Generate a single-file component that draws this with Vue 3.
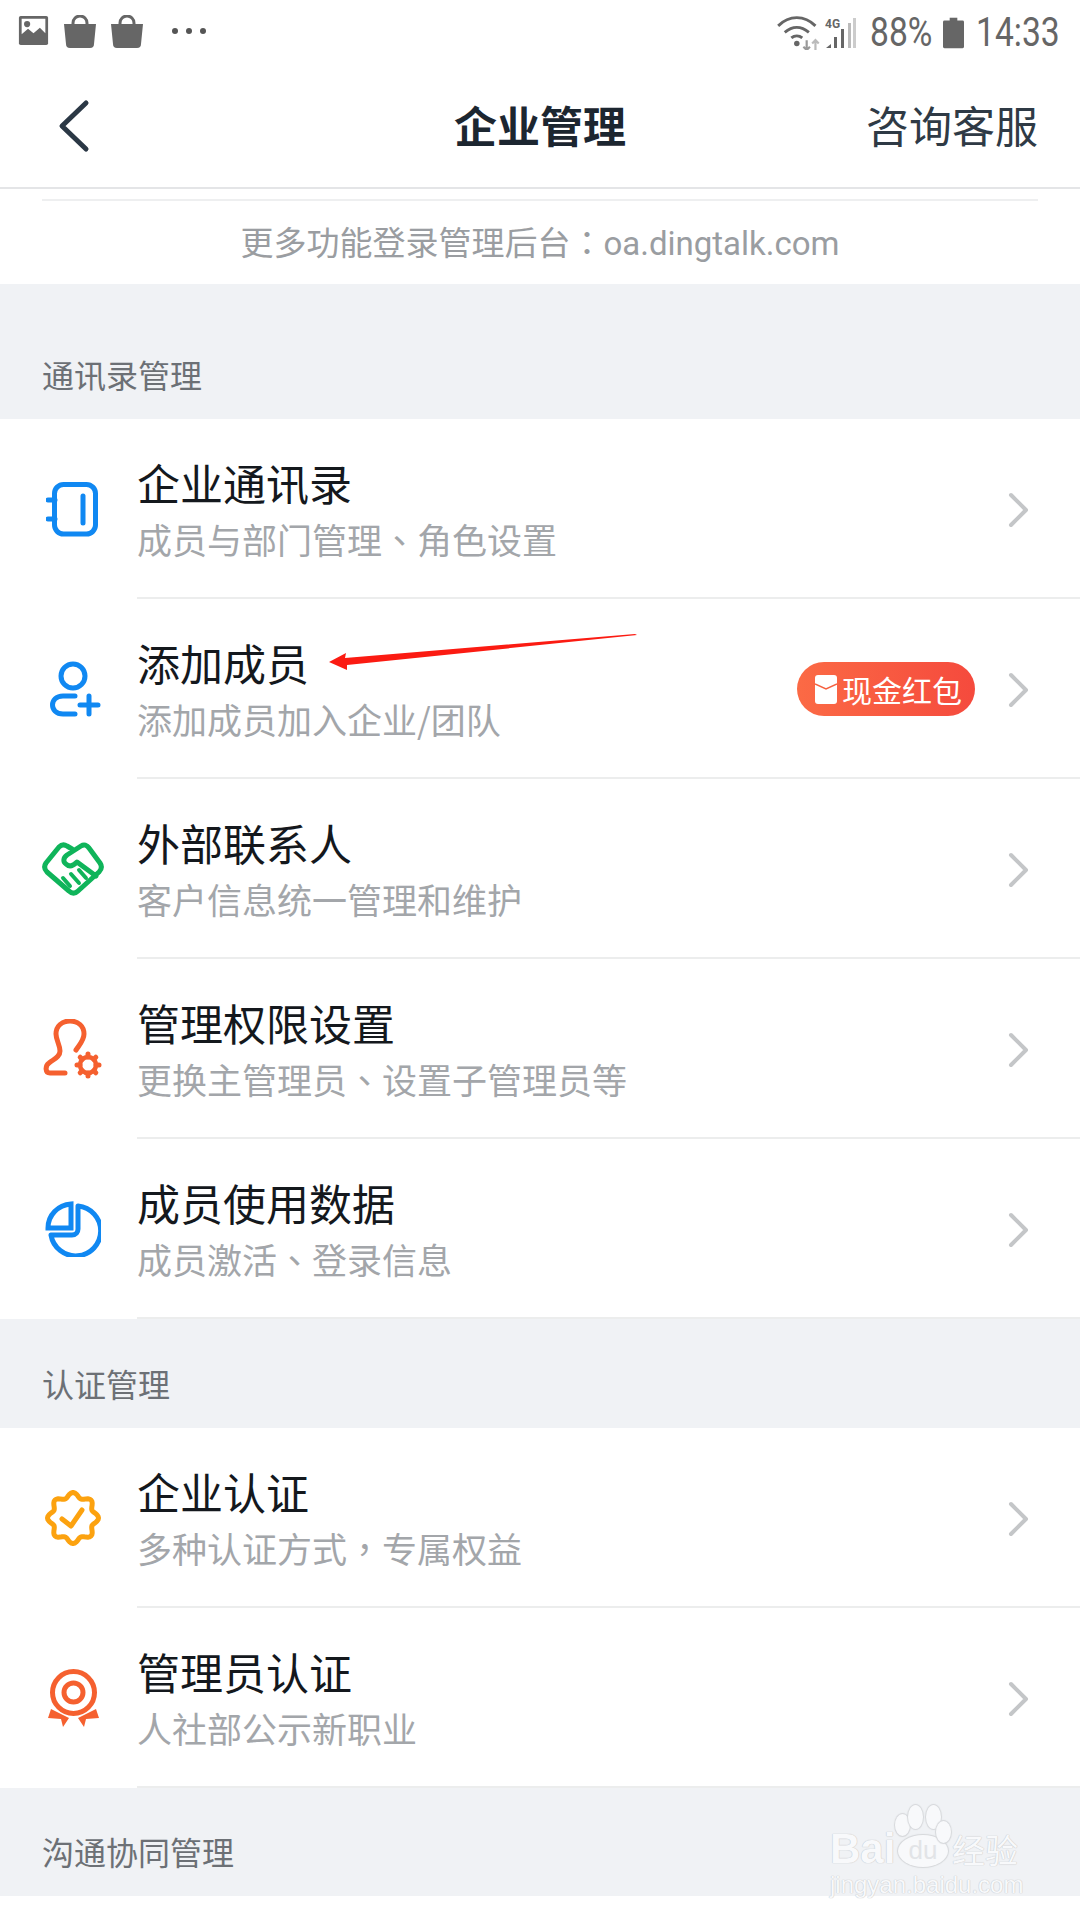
<template>
  <div class="page">
    <div class="status">
      <div class="status-left">
        <svg width="31" height="31" viewBox="0 0 34 34">
          <path d="M3 1h28a2 2 0 0 1 2 2v28a2 2 0 0 1-2 2H3a2 2 0 0 1-2-2V3a2 2 0 0 1 2-2z" fill="#666" />
          <path d="M4 4h26v16l-6-6-7 6-6-5-7 6z" fill="#fff" />
          <circle cx="10" cy="10" r="3.4" fill="#666" />
        </svg>
        <svg v-for="n in 2" :key="n" width="32" height="34" viewBox="0 0 32 34">
          <path d="M9 11V8a7 7 0 0 1 14 0v3" fill="none" stroke="#666" stroke-width="3" />
          <path d="M0 9h32l-2 20a4 4 0 0 1-4 4H6a4 4 0 0 1-4-4z" fill="#666" />
        </svg>
        <div class="dots"><i></i><i></i><i></i></div>
      </div>
      <div class="status-right">
        <svg width="44" height="34" viewBox="0 0 40 31">
          <path d="M1 9c10-10 24-10 34 0M7 15c7-6 15-6 22 0M13 20c3-2.500 7-2.500 10 0" fill="none" stroke="#666" stroke-width="2.600" />
          <circle cx="18" cy="25" r="2.500" fill="#666" />
          <path d="M27 22v9M24 28l3 3 3-3" fill="none" stroke="#999" stroke-width="2" />
          <path d="M35 31v-9M32 25l3-3 3 3" fill="none" stroke="#bbb" stroke-width="2" />
        </svg>
        <svg class="signal" width="32" height="32" viewBox="0 0 32 32">
          <text x="0" y="11" class="four-g">4G</text>
          <path d="M1 31l5-4v4z" fill="#666" />
          <rect x="9" y="20" width="3" height="11" fill="#666" />
          <rect x="16" y="12" width="3" height="19" fill="#666" />
          <rect x="23" y="6" width="3" height="25" fill="#bbb" />
          <rect x="28" y="1" width="3" height="30" fill="#ccc" />
        </svg>
        <span class="status-text pct">88%</span>
        <svg width="21" height="32" viewBox="0 0 22 32">
          <rect x="7" y="0" width="8" height="4" fill="#666" />
          <rect x="0" y="3" width="22" height="29" rx="1.500" fill="#666" />
        </svg>
        <span class="status-text clock">14:33</span>
      </div>
    </div>

    <div class="nav">
      <svg class="back" width="34" height="54" viewBox="0 0 34 54">
        <path d="M29 4L5 27l24 23" fill="none" stroke="#2b3845" stroke-width="5" stroke-linecap="round" stroke-linejoin="round" />
      </svg>
      <div class="nav-title">企业管理</div>
      <div class="nav-action">咨询客服</div>
    </div>

    <div class="hint">
      <div class="hint-line"></div>
      <div class="hint-text">更多功能登录管理后台<span class="punct">：</span>oa.dingtalk.com</div>
    </div>

    <template v-for="group in groups" :key="group.name">
      <div class="section" :class="group.size">{{ group.name }}</div>
      <div v-for="row in group.rows" :key="row.title" class="row">
        <div class="icon">
          <svg v-if="row.icon === 'book'" width="54" height="56" viewBox="0 0 54 56" fill="none" stroke="#1088f2" stroke-width="5" stroke-linecap="round">
            <rect x="8.500" y="3.500" width="41" height="49.500" rx="9" />
            <path d="M37 15v27" />
            <path d="M2 19h7M2 38h7" />
          </svg>
          <svg v-else-if="row.icon === 'user'" width="56" height="56" viewBox="0 0 56 56" fill="none" stroke="#1088f2" stroke-width="5" stroke-linecap="round">
            <circle cx="28" cy="15" r="12" />
            <path d="M30 35H18c-14 0-14 18 0 18h12" />
            <path d="M35 44h18M44 35v18" />
          </svg>
          <svg v-else-if="row.icon === 'hands'" width="62" height="54" viewBox="0 0 62 54" fill="none" stroke="#0fb45a" stroke-width="5" stroke-linecap="round" stroke-linejoin="round">
            <path d="M30 7l-5-3c-3-2-6-1-8 1L4 21c-2 3-2 6 1 9l22 19c3 3 6 3 9 0l21-19c3-3 3-6 1-9L47 6c-2-3-5-4-8-2L25 13c-4 3-4 7-1 9 3 3 7 2 11-2l19 14" />
            <path d="M21 36l7 8M29 32l8 9M37 28l7 8" stroke-width="4" />
          </svg>
          <svg v-else-if="row.icon === 'admin'" width="60" height="60" viewBox="0 0 60 60" fill="none" stroke="#f5602f" stroke-width="5" stroke-linecap="round">
            <path d="M33 31c4-6 8-10 8-16 0-8-6-13-14-13S13 7 13 15c0 6 4 11 4 17 0 6-6 8-11 12-4 3-4 10 1 10h15" />
            <circle cx="45" cy="46" r="8" stroke-width="4.500" />
            <path d="M45 35v3M45 54v3M34 46h3M53 46h3M37.200 38.200l2 2M50.800 51.800l2 2M52.800 38.200l-2 2M39.200 51.800l-2 2" stroke-width="5" />
          </svg>
          <svg v-else-if="row.icon === 'pie'" width="56" height="56" viewBox="0 0 56 56" fill="none" stroke="#1088f2" stroke-width="5">
            <path d="M26 3v24H3C3 14 13 4 26 3z" stroke-linejoin="miter" />
            <path d="M33 5A25 25 0 1 1 6 34h21c4 0 6-3 6-6z" stroke-linejoin="round" />
          </svg>
          <svg v-else-if="row.icon === 'seal'" width="56" height="56" viewBox="0 0 56 56" fill="none" stroke="#fca20f" stroke-width="5" stroke-linecap="round" stroke-linejoin="round">
            <path :d="sealPath" />
            <path d="M17 29l9 7 11-16" />
          </svg>
          <svg v-else width="51" height="59" viewBox="0 0 51 59" fill="none" stroke="#f5602f">
            <circle cx="25.500" cy="23.500" r="21" stroke-width="5" />
            <circle cx="25.500" cy="23.500" r="9.500" stroke-width="5" />
            <path d="M3 40L0 49l13 1 2 8 6-9zM48 40l3 9-13 1-2 8-6-9z" fill="#f5602f" stroke="none" />
          </svg>
        </div>
        <div class="row-body">
          <div class="row-text">
            <div class="row-title">{{ row.title }}</div>
            <div class="row-sub">
              <span v-for="(part, i) in splitPunct(row.sub)" :key="i" :class="{ punct: i % 2 === 1 }">{{ part }}</span>
            </div>
          </div>
          <div v-if="row.badge" class="badge">
            <svg width="22" height="29" viewBox="0 0 22 29">
              <rect width="22" height="29" rx="3" fill="#fff" />
              <path d="M0 9l11 5 11-5" fill="none" stroke="#f5603f" stroke-width="1.500" />
            </svg>
            {{ row.badge }}
          </div>
          <svg class="chevron" width="22" height="36" viewBox="0 0 22 36">
            <path d="M3 3l15 15L3 33" fill="none" stroke="#c4c6c8" stroke-width="4" stroke-linecap="round" stroke-linejoin="round" />
          </svg>
        </div>
      </div>
    </template>

    <div class="section">沟通协同管理</div>

    <svg class="arrow" width="310" height="36" viewBox="0 0 310 36">
      <path d="M0 28L17 19 16 24 306 0 308 1 18 31 18 36z" fill="#fb1b12" />
    </svg>

    <div class="mark">
      <div class="mark-top">
        <span class="mark-bai">Bai</span>
        <span class="mark-paw">
          <i class="toe a"></i><i class="toe b"></i><i class="toe c"></i><i class="toe d"></i>
          <span class="mark-du">du</span>
        </span>
        <span class="mark-cn">经验</span>
      </div>
      <div class="mark-url">jingyan.baidu.com</div>
    </div>
  </div>
</template>

<script setup>
const groups = [
  {
    name: '通讯录管理',
    size: 'tall',
    rows: [
      { icon: 'book', title: '企业通讯录', sub: '成员与部门管理、角色设置' },
      { icon: 'user', title: '添加成员', sub: '添加成员加入企业/团队', badge: '现金红包' },
      { icon: 'hands', title: '外部联系人', sub: '客户信息统一管理和维护' },
      { icon: 'admin', title: '管理权限设置', sub: '更换主管理员、设置子管理员等' },
      { icon: 'pie', title: '成员使用数据', sub: '成员激活、登录信息' }
    ]
  },
  {
    name: '认证管理',
    size: 'mid',
    rows: [
      { icon: 'seal', title: '企业认证', sub: '多种认证方式，专属权益' },
      { icon: 'medal', title: '管理员认证', sub: '人社部公示新职业' }
    ]
  }
]

// the punctuation sits centred in the cell in the original, as in the TC font
const splitPunct = (text) => text.split(/([、，])/)

// wavy badge outline, eight lobes
const sealPath = (() => {
  let d = ''
  for (let i = 0; i < 96; i++) {
    const a = (i / 96) * Math.PI * 2
    const r = 23 + 2.5 * Math.cos(a * 8 )
    const x = 28 + r * Math.sin(a)
    const y = 28 - r * Math.cos(a)
    d += (i ? 'L' : 'M') + x.toFixed(1) + ' ' + y.toFixed(1)
  }
  return d + 'z'
})()
</script>

<style>
body {
  margin: 0;
  background: #fff;
}
</style>

<style scoped>
.page {
  position: relative;
  width: 1080px;
  height: 1920px;
  overflow: hidden;
  background: #fff;
  font-family: "Noto Sans CJK SC", "Noto Sans", sans-serif;
}

.status {
  height: 64px;
  padding: 15px 21px 0 18px;
  box-sizing: border-box;
  display: flex;
  justify-content: space-between;
}

.status-left {
  display: flex;
  align-items: flex-start;
  gap: 15px;
}

.dots {
  display: flex;
  gap: 8px;
  margin: 13px 0 0 14px;
}

.dots i {
  width: 6px;
  height: 6px;
  border-radius: 50%;
  background: #555;
}

.status-right {
  display: flex;
  align-items: center;
  height: 36px;
}

.signal {
  margin-left: 4px;
}

.four-g {
  font: 700 12px "Roboto", sans-serif;
  fill: #666;
}

.status-text {
  display: inline-block;
  font: 400 40px/36px "Roboto", sans-serif;
  color: #666;
  transform: scaleX(0.84);
  transform-origin: left center;
}

.pct {
  width: 60px;
  margin: 0 13px 0 13px;
}

.clock {
  width: 83px;
  margin-left: 12px;
}

.nav {
  height: 125px;
  box-sizing: border-box;
  border-bottom: 2px solid #e4e5e7;
  display: flex;
  align-items: center;
  justify-content: space-between;
  padding: 0 42px 4px 57px;
  position: relative;
}

.back {
  margin-top: 5px;
}

.nav-title {
  position: absolute;
  left: 0;
  right: 0;
  text-align: center;
  font-size: 43px;
  font-weight: 700;
  color: #1c2630;
  pointer-events: none;
}

.nav-action {
  font-size: 43px;
  color: #2f3a45;
}

.hint {
  height: 95px;
  padding: 10px 42px 0;
  box-sizing: border-box;
}

.hint-line {
  height: 2px;
  background: #eeeff0;
}

.hint-text {
  margin-top: 7px;
  text-align: center;
  font-family: "Roboto", "Noto Sans CJK SC", sans-serif;
  font-size: 33px;
  line-height: 66px;
  color: #9a9da1;
}

.punct {
  font-family: "Noto Sans CJK TC", sans-serif;
}

.section {
  height: 108px;
  padding: 0 42px 22px;
  box-sizing: border-box;
  display: flex;
  align-items: flex-end;
  background: #f0f2f5;
  font-size: 32px;
  line-height: 46px;
  color: #6c7075;
}

.section.tall {
  height: 135px;
}

.section.mid {
  height: 109px;
}

.row {
  height: 180px;
  display: flex;
  background: #fff;
}

.icon {
  width: 137px;
  flex: none;
  display: flex;
  align-items: center;
  justify-content: center;
  padding-left: 9px;
  box-sizing: border-box;
}

.row-body {
  flex: 1;
  display: flex;
  align-items: center;
  padding-right: 50px;
  border-bottom: 2px solid #eceded;
  box-sizing: border-box;
}

.row:last-child .row-body {
  border-bottom: none;
}

.row-text {
  flex: 1;
}

.row-title {
  font-size: 43px;
  line-height: 56px;
  color: #14181d;
}

.row-sub {
  margin-top: 5px;
  font-size: 35px;
  line-height: 48px;
  color: #a3a6aa;
}

.badge {
  width: 178px;
  height: 54px;
  margin: 2px 33px 0 0;
  box-sizing: border-box;
  padding-left: 18px;
  display: flex;
  align-items: center;
  gap: 5px;
  border-radius: 27px;
  background: linear-gradient(90deg, #fb6a45, #f54a3d);
  color: #fff;
  font-size: 30px;
  white-space: nowrap;
}

.chevron {
  margin-top: 4px;
}

.arrow {
  position: absolute;
  left: 329px;
  top: 634px;
}

.mark {
  position: absolute;
  left: 830px;
  top: 1805px;
  width: 200px;
  color: #f8f9fb;
  text-shadow: 0 0 1px #c4c6c9, 0 0 1px #c4c6c9;
}

.mark-top {
  display: flex;
  align-items: flex-end;
  height: 62px;
}

.mark-bai {
  width: 60px;
  font: 700 42px/36px "Liberation Sans", sans-serif;
}

.mark-paw {
  position: relative;
  width: 50px;
  height: 32px;
  margin: 0 4px 0 8px;
  border-radius: 50%;
  background: #f8f9fb;
  box-shadow: 0 0 1px 1px #d5d7da;
  text-align: center;
  flex: none;
}

.toe {
  position: absolute;
  border-radius: 50%;
  background: #f8f9fb;
  box-shadow: 0 0 1px 1px #d5d7da;
}

.toe.a { width: 15px; height: 22px; left: -3px; top: -21px; }
.toe.b { width: 15px; height: 24px; left: 10px; top: -30px; }
.toe.c { width: 15px; height: 24px; left: 28px; top: -30px; }
.toe.d { width: 15px; height: 22px; left: 38px; top: -14px; }

.mark-du {
  position: relative;
  font: 400 26px/30px "Liberation Sans", sans-serif;
  color: #e2e4e7;
  text-shadow: none;
}

.mark-cn {
  font-size: 33px;
  line-height: 36px;
  white-space: nowrap;
}

.mark-url {
  font: 400 24px/22px "Liberation Sans", sans-serif;
  margin-top: 7px;
  white-space: nowrap;
}
</style>
